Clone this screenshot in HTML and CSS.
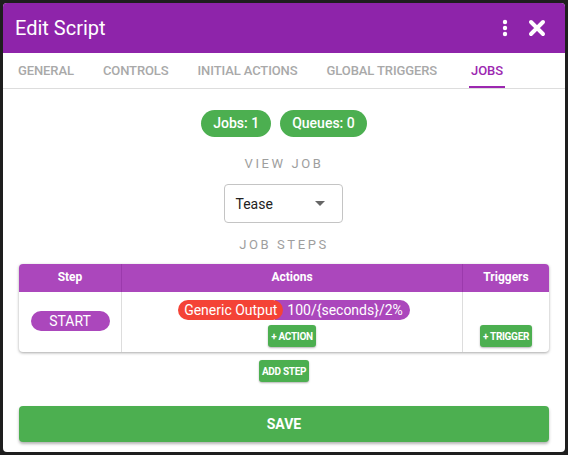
FILE: index.html
```html
<!DOCTYPE html>
<html>
<head>
<meta charset="utf-8">
<link rel="stylesheet" href="styles.css">
</head>
<body>
<div class="dialog">
  <div class="header">
    <div class="title">Edit Script</div>
    <div class="hicons">
      <svg class="dots" width="6" height="18" viewBox="0 0 6 18"><circle cx="3" cy="3" r="2.2" fill="#fff"/><circle cx="3" cy="9" r="2.2" fill="#fff"/><circle cx="3" cy="15" r="2.2" fill="#fff"/></svg>
      <svg class="close" width="18" height="18" viewBox="0 0 18 18"><path d="M3 3 L15 15 M15 3 L3 15" stroke="#fff" stroke-width="4" stroke-linecap="round"/></svg>
    </div>
  </div>
  <div class="tabs">
    <div class="tab">GENERAL</div>
    <div class="tab">CONTROLS</div>
    <div class="tab">INITIAL ACTIONS</div>
    <div class="tab">GLOBAL TRIGGERS</div>
    <div class="tab active">JOBS</div>
  </div>
  <div class="content">
    <div class="chips">
      <span class="chip green">Jobs: 1</span>
      <span class="chip green">Queues: 0</span>
    </div>
    <div class="label">VIEW JOB</div>
    <div class="select">
      <span>Tease</span>
      <svg width="10" height="5" viewBox="0 0 10 5"><path d="M0 0 L10 0 L5 5 Z" fill="#666"/></svg>
    </div>
    <div class="label steps">JOB STEPS</div>
    <div class="table">
      <div class="row head">
        <div class="cell c1">Step</div>
        <div class="cell c2">Actions</div>
        <div class="cell c3">Triggers</div>
      </div>
      <div class="row body">
        <div class="cell c1"><span class="start">START</span></div>
        <div class="cell c2 actions">
          <div class="action"><span class="ac-red">Generic Output</span><span class="ac-purple">100/{seconds}/2%</span></div>
          <button class="small">+ ACTION</button>
        </div>
        <div class="cell c3 trig"><button class="small">+ TRIGGER</button></div>
      </div>
    </div>
    <button class="small addstep">ADD STEP</button>
    <button class="save">SAVE</button>
  </div>
</div>
</body>
</html>
```
FILE: styles.css
```css
html, body { margin: 0; padding: 0; }
body {
  background: #1e1e1e;
  width: 568px;
  height: 455px;
  font-family: Roboto, "Liberation Sans", sans-serif;
  padding: 3px;
  box-sizing: border-box;
}
.dialog {
  width: 562px;
  height: 449px;
  background: #fff;
  border-radius: 4px;
  overflow: hidden;
  display: flex;
  flex-direction: column;
}
.header {
  background: #8e24aa;
  height: 50px;
  display: flex;
  align-items: center;
  justify-content: space-between;
  padding: 0 19px 0 12px;
}
.title { color: #fff; font-size: 20px; }
.hicons { display: flex; align-items: center; gap: 20px; }
.dots { display: block; }
.close { display: block; }
.tabs {
  display: flex;
  height: 35px;
  border-bottom: 1px solid #ddd;
  padding-left: 15px;
  gap: 29px;
}
.tab {
  font-size: 13px;
  font-weight: 500;
  color: #a9a9a9;
  line-height: 35px;
  box-sizing: border-box;
  height: 35px;
  letter-spacing: -0.1px;
}
.tab.active {
  color: #9c27b0;
  border-bottom: 2px solid #9c27b0;
  padding: 0 2px;
  margin-left: 3px;
}
.content {
  display: flex;
  flex-direction: column;
  align-items: center;
  padding: 21px 16px 0;
}
.chips { display: flex; gap: 9px; }
.chip {
  height: 27px;
  line-height: 27px;
  border-radius: 14px;
  padding: 0 12px;
  font-size: 14px;
  font-weight: 500;
  color: #fff;
}
.green { background: #4caf50; }
.label {
  margin-top: 20px;
  font-size: 13px;
  letter-spacing: 2.6px;
  color: #9e9e9e;
  line-height: 14px;
}
.select {
  margin-top: 13px;
  width: 119px;
  height: 39px;
  box-sizing: border-box;
  border: 1px solid #c4c4c4;
  border-radius: 4px;
  display: flex;
  align-items: center;
  justify-content: space-between;
  padding: 0 17px 0 11px;
  font-size: 14px;
  color: #222;
  margin-left: -2px;
}
.label.steps { margin-top: 15px; }
.table {
  margin-top: 12px;
  align-self: stretch;
  border-radius: 4px;
  overflow: hidden;
  box-shadow: 0 1px 3px rgba(0,0,0,0.35);
}
.row { display: flex; }
.cell { box-sizing: border-box; }
.c1 { width: 103px; border-right: 1px solid #ddd; }
.c2 { width: 341px; border-right: 1px solid #ddd; }
.c3 { flex: 1; }
.head { background: #ab47bc; height: 28px; }
.head .cell {
  color: #fff;
  font-size: 12px;
  font-weight: 700;
  text-align: center;
  line-height: 27px;
  border-right-color: #9b3aac;
}
.body { height: 60px; }
.body .c1 { display: flex; align-items: center; justify-content: center; }
.start {
  background: #ab47bc;
  color: #fff;
  font-size: 14px;
  width: 79px;
  height: 20px;
  line-height: 20px;
  border-radius: 10px;
  text-align: center;
  margin-top: -2px;
}
.actions {
  display: flex;
  flex-direction: column;
  align-items: center;
  padding-top: 8px;
  gap: 5px;
}
.action { display: flex; font-size: 14px; color: #fff; height: 20px; line-height: 20px; padding-left: 4px; }
.ac-red {
  background: #f44336;
  border-radius: 10px;
  padding: 0 6px;
  position: relative;
  z-index: 1;
}
.ac-purple {
  background: #ab47bc;
  border-radius: 0 10px 10px 0;
  padding: 0 7px 0 12px;
  margin-left: -8px;
}
.small {
  background: #4caf50;
  color: #fff;
  border: none;
  border-radius: 3px;
  font-family: Roboto, "Liberation Sans", sans-serif;
  font-size: 10px;
  font-weight: 700;
  height: 22px;
  padding: 0 3px;
  box-shadow: 0 1px 2px rgba(0,0,0,0.3);
  letter-spacing: -0.3px;
}
.trig { display: flex; align-items: flex-end; justify-content: center; padding-bottom: 5px; }
.addstep { margin-top: 8px; }
.save {
  margin-top: 24px;
  align-self: stretch;
  height: 36px;
  background: #4caf50;
  color: #fff;
  border: none;
  border-radius: 4px;
  font-family: Roboto, "Liberation Sans", sans-serif;
  font-size: 14px;
  font-weight: 700;
  box-shadow: 0 2px 3px rgba(0,0,0,0.3);
}
```
